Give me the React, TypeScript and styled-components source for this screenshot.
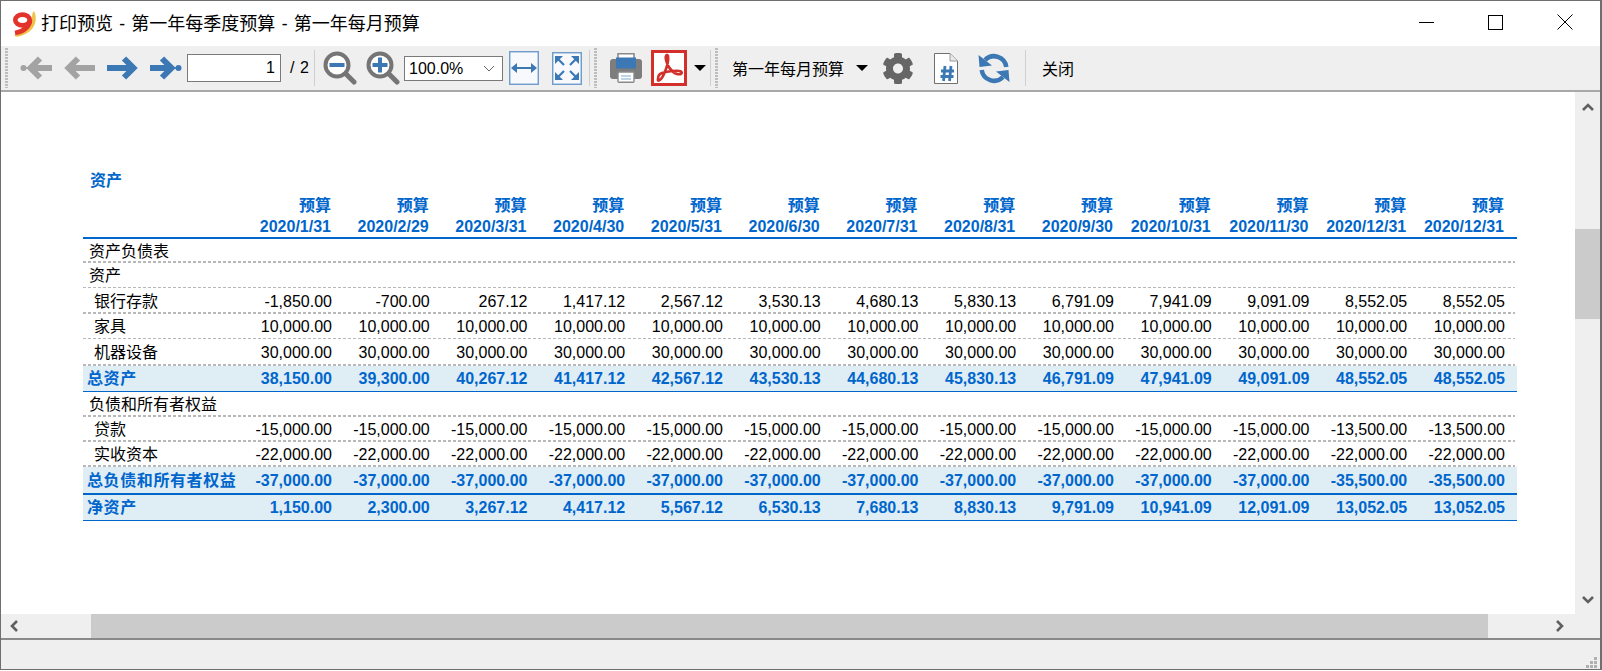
import React from "react";
import styled, { createGlobalStyle } from "styled-components";
import { FaCog } from "react-icons/fa";

const Global = createGlobalStyle`
  html, body { margin: 0; padding: 0; background: #fff; }
  body { font-family: "Liberation Sans", "Noto Sans CJK SC", sans-serif; color: #000; overflow: hidden; }
`;

const Win = styled.div`
  width: 1602px; height: 670px; box-sizing: border-box;
  border: 1px solid #6f6f6f; border-width: 1px 2px 1px 1px;
  display: flex; flex-direction: column; background: #fff;
`;
const TitleBar = styled.div`
  height: 45px; flex: none; display: flex; align-items: center; padding-left: 11px;
`;
const Title = styled.div`
  margin: 0 0 4px 3px; font-family: "Noto Sans", "Noto Sans CJK SC", sans-serif; font-size: 18px; white-space: nowrap; word-spacing: 1.6px;
`;
const WinButtons = styled.div`
  margin-left: auto; display: flex; align-items: center; padding-right: 27px; gap: 54px; margin-top: -3px;
`;
const Toolbar = styled.div`
  height: 44px; flex: none; background: #efefef; display: flex; align-items: center;
  border-bottom: 2px solid #a8a8a8; box-sizing: content-box; position: relative;
`;
const Grip = styled.span<{ $ml?: number }>`
  flex: none; width: 3px; height: 40px; margin-left: ${p => p.$ml ?? 0}px;
  background: repeating-linear-gradient(to bottom, #bdbdbd 0 2px, transparent 2px 3px);
`;
const Sep = styled.span<{ $ml?: number }>`
  flex: none; width: 1px; height: 36px; background: #cfcfcf; margin-left: ${p => p.$ml ?? 0}px;
`;
const Slot = styled.span<{ $ml?: number; $w: number }>`
  flex: none; display: flex; align-items: center; justify-content: center;
  width: ${p => p.$w}px; margin-left: ${p => p.$ml ?? 0}px;
`;
const PageInput = styled.div`
  flex: none; width: 94px; height: 28px; box-sizing: border-box; margin-left: 5px;
  border: 1px solid #7a7a7a; background: #fff; font-size: 16px; text-align: right;
  line-height: 26px; padding-right: 5px;
`;
const PageTotal = styled.div`
  flex: none; margin-left: 9px; font-size: 16px; width: 24px; white-space: nowrap; word-spacing: 1px;
`;
const ZoomSelect = styled.div`
  flex: none; width: 99px; height: 25px; box-sizing: border-box; margin-left: 4px;
  border: 1px solid #7a7a7a; background: #fff; font-size: 16px; line-height: 23px;
  padding-left: 4px; display: flex; align-items: center; justify-content: space-between; padding-right: 7px;
`;
const ToolLabel = styled.div<{ $ml: number }>`
  flex: none; font-family: "Noto Sans CJK SC", sans-serif; font-size: 16px; margin-left: ${p => p.$ml}px; white-space: nowrap; line-height: 20px;
`;
const Caret = styled.span<{ $ml: number }>`
  flex: none; width: 0; height: 0; margin-left: ${p => p.$ml}px;
  border-left: 6px solid transparent; border-right: 6px solid transparent; border-top: 6px solid #000;
`;
const FitBox = styled.span<{ $w: number; $h: number; $ml: number }>`
  flex: none; box-sizing: border-box; display: flex; align-items: center; justify-content: center;
  width: ${p => p.$w}px; height: ${p => p.$h}px; margin-left: ${p => p.$ml}px;
  border: 1px solid #6f9dcb; background: #f7f9fc; box-shadow: inset 0 0 0 0.5px #7ea9d3;
`;
const PdfBox = styled.span`
  flex: none; box-sizing: border-box; width: 36px; height: 36px; margin-left: 9px;
  border: 3px solid #d3302c; background: #fff; display: flex; align-items: center; justify-content: center;
`;

const Middle = styled.div`
  flex: 1; min-height: 0; display: flex;
`;
const Viewport = styled.div`
  flex: 1; min-width: 0; background: #fff; padding: 76px 0 0 82px; box-sizing: border-box; overflow: hidden;
`;
const VScroll = styled.div`
  width: 25px; flex: none; background: #efefef; display: flex; flex-direction: column; align-items: center;
`;
const VThumb = styled.div`
  width: 25px; height: 90px; background: #cbcbcb; margin-top: 116px; margin-bottom: auto;
`;
const ArrowBox = styled.span<{ $pad: string }>`
  display: flex; padding: ${p => p.$pad}; flex: none;
`;
const HRow = styled.div`
  height: 24px; flex: none; display: flex; align-items: center; background: #efefef;
`;
const HThumb = styled.div`
  width: 1397px; height: 24px; background: #cbcbcb; margin-left: 71px;
`;
const Status = styled.div`
  height: 31px; box-sizing: border-box; flex: none; background: #efefef; border-top: 2px solid #8a8a8a; position: relative;
`;
const ResizeGrip = styled.svg`
  position: absolute; right: 3px; bottom: 1px;
`;

const SectionTitle = styled.div`
  font-family: "Noto Sans CJK SC", sans-serif; font-weight: 700; color: #0066cc; font-size: 16px;
  padding-left: 7px; height: 27px; line-height: 22px;
`;
const Table = styled.div`
  width: 1434px;
`;
const Row = styled.div<{ $h: number; $rule?: "thin" | "thick" | "none"; $band?: boolean }>`
  display: grid; grid-template-columns: 151.25px repeat(13, 97.75px); padding-right: 12px;
  height: ${p => p.$h}px; box-sizing: border-box; align-items: center;
  ${p => p.$band ? "background-color: #dfedf5;" : ""}
  ${p => p.$rule === "thin" || p.$rule === "thick" ? `
    background-image: repeating-linear-gradient(to right, #b8b8b8 0 3px, transparent 3px 5px);
    background-size: 1432px ${p.$rule === "thick" ? 2 : 1}px;
    background-position: left bottom; background-repeat: no-repeat;
  ` : ""}
`;
const HeadRow = styled.div`
  display: grid; grid-template-columns: 151.25px repeat(13, 97.75px); padding-right: 12px;
  height: 44px; box-sizing: border-box; border-bottom: 2px solid #0066cc;
`;
const HeadCell = styled.div`
  text-align: right; color: #0066cc; font-weight: 700; font-size: 16px; line-height: 21px; padding-right: 1px; white-space: nowrap;
`;
const Label = styled.div<{ $indent?: boolean; $bold?: boolean }>`
  font-family: "Noto Sans CJK SC", sans-serif; font-size: 16px; white-space: nowrap; margin-top: -3px;
  padding-left: ${p => (p.$bold ? 4 : p.$indent ? 11 : 6)}px;
  font-weight: ${p => (p.$bold ? 700 : 400)};
  color: ${p => (p.$bold ? "#0066cc" : "#000")};
  ${p => (p.$bold ? "letter-spacing: .6px;" : "")}
`;
const Num = styled.div<{ $bold?: boolean }>`
  text-align: right; font-size: 16px; white-space: nowrap; padding-top: 1px;
  font-weight: ${p => (p.$bold ? 700 : 400)};
  color: ${p => (p.$bold ? "#0066cc" : "#000")};
`;
const Rule = styled.div<{ $w: number }>`
  height: ${p => p.$w}px; background: #0066cc;
`;

const dates = ["2020/1/31","2020/2/29","2020/3/31","2020/4/30","2020/5/31","2020/6/30","2020/7/31","2020/8/31","2020/9/30","2020/10/31","2020/11/30","2020/12/31","2020/12/31"];

type R = { label: string; h: number; rule?: "thin"|"thick"|"none"; indent?: boolean; bold?: boolean; vals?: string[]; after?: number };
const ten = Array(13).fill("10,000.00");
const thirty = Array(13).fill("30,000.00");
const rows: R[] = [
  { label: "资产负债表", h: 24, rule: "thick" },
  { label: "资产", h: 25, rule: "thin" },
  { label: "银行存款", h: 26, rule: "thick", indent: true, vals: ["-1,850.00","-700.00","267.12","1,417.12","2,567.12","3,530.13","4,680.13","5,830.13","6,791.09","7,941.09","9,091.09","8,552.05","8,552.05"] },
  { label: "家具", h: 25, rule: "thin", indent: true, vals: ten },
  { label: "机器设备", h: 27, rule: "thick", indent: true, vals: thirty },
  { label: "总资产", h: 25, bold: true, rule: "none", after: 1, vals: ["38,150.00","39,300.00","40,267.12","41,417.12","42,567.12","43,530.13","44,680.13","45,830.13","46,791.09","47,941.09","49,091.09","48,552.05","48,552.05"] },
  { label: "负债和所有者权益", h: 25, rule: "thick" },
  { label: "贷款", h: 25, rule: "thick", indent: true, vals: [...Array(11).fill("-15,000.00"),"-13,500.00","-13,500.00"] },
  { label: "实收资本", h: 25, rule: "thick", indent: true, vals: Array(13).fill("-22,000.00") },
  { label: "总负债和所有者权益", h: 26, bold: true, rule: "none", after: 2, vals: [...Array(11).fill("-37,000.00"),"-35,500.00","-35,500.00"] },
  { label: "净资产", h: 25, bold: true, rule: "none", after: 1, vals: ["1,150.00","2,300.00","3,267.12","4,417.12","5,567.12","6,530.13","7,680.13","8,830.13","9,791.09","10,941.09","12,091.09","13,052.05","13,052.05"] },
];

const GRAY = "#a3a3a3";
const BLUE = "#3c78b4";
const Arrow = ({ color, dir, dot }: { color: string; dir: "l" | "r"; dot?: boolean }) => (
  <svg width="32" height="24" viewBox="0 0 32 24" style={dir === "l" ? { transform: "scaleX(-1)" } : undefined}>
    {dot ? (
      <>
        <path d="M0 12H20M12 2.5 21.5 12 12 21.5" fill="none" stroke={color} strokeWidth="6" />
        <path d="M22 12H27" stroke={color} strokeWidth="1.5" />
        <circle cx="28.5" cy="12" r="3" fill={color} />
      </>
    ) : (
      <path d="M0 12H24M17 2.5 26.5 12 17 21.5" fill="none" stroke={color} strokeWidth="6" />
    )}
  </svg>
);
const Magnifier = ({ plus }: { plus?: boolean }) => (
  <svg width="34" height="34" viewBox="0 0 34 34">
    <circle cx="14" cy="14" r="11.5" fill="#fff" stroke="#757575" strokeWidth="4" />
    <path d="M23 23 31 31" stroke="#757575" strokeWidth="5" strokeLinecap="round" />
    <path d="M6.5 14H21.5" stroke={BLUE} strokeWidth="4" />
    {plus && <path d="M14 6.5V21.5" stroke={BLUE} strokeWidth="4" />}
  </svg>
);
const Logo = () => (
  <svg width="26" height="26" viewBox="0 0 26 26">
    <path d="M22 0C26 8 24 21 7 25.5 3.5 26.2 1.5 24.5 3 24 13 23 20 14 20.5 2Z" fill="#eec34a" />
    <ellipse cx="10.5" cy="9" rx="7.2" ry="5.4" fill="none" stroke="#e3342c" strokeWidth="4.6" />
    <path d="M18 9C18 15 12 20.5 3 22" fill="none" stroke="#e3342c" strokeWidth="4.6" />
  </svg>
);
const Printer = () => (
  <svg width="32" height="30" viewBox="0 0 32 30">
    <path d="M8 5V.8H24V5" fill="#fff" stroke="#8a8a8a" strokeWidth="1.6" />
    <path d="M3 6H29Q32 6 32 9V23Q32 26 29 26H3Q0 26 0 23V9Q0 6 3 6Z" fill="#7d7d7d" />
    <rect x="6" y="4.5" width="20" height="11" fill={BLUE} />
    <rect x="8" y="19" width="16" height="10.2" rx="1" fill="#fff" stroke="#8a8a8a" strokeWidth="1.4" />
    <path d="M11 23H21M11 26H21" stroke="#7ea9d3" strokeWidth="1" />
  </svg>
);
const Acrobat = () => (
  <svg width="30" height="30" viewBox="0 0 30 30">
    <path d="M4 26C3 29 7 28 10 21 13 14 15 7 14 3 13 1 11 2 12 7 13 12 17 19 23 21 27 22 29 20 27 18.5 24 17 14 18 8 20 5 21 4 24 4 26Z" fill="none" stroke="#d3302c" strokeWidth="2.6" />
  </svg>
);
const DocHash = () => (
  <svg width="24" height="31" viewBox="0 0 24 31">
    <path d="M.5.5H16L23.5 8V30.5H.5Z" fill="#fff" stroke="#707070" />
    <path d="M16 .5V8H23.5" fill="#e8e8e8" stroke="#9a9a9a" />
    <path d="M11 13 9.5 28M17 13 15.5 28M7 18H20M6.5 23.5H19.5" fill="none" stroke={BLUE} strokeWidth="2.8" />
  </svg>
);
const Refresh = () => (
  <svg width="32" height="31" viewBox="0 0 32 31">
    <path d="M7 7A12.5 12.5 0 0 1 28.3 14" fill="none" stroke={BLUE} strokeWidth="4.5" />
    <path d="M25 24A12.5 12.5 0 0 1 3.7 17" fill="none" stroke={BLUE} strokeWidth="4.5" />
    <path d="M.5 2 1.5 14 14 12.5ZM31.5 29 30.5 17 18 18.5Z" fill={BLUE} />
  </svg>
);
const Chevron = ({ d }: { d: string }) => (
  <svg width="12" height="12" viewBox="0 0 12 12">
    <path d={d} fill="none" stroke="#606060" strokeWidth="2.6" />
  </svg>
);

export default function App() {
  return (
    <>
      <Global />
      <Win>
        <TitleBar>
          <Logo />
          <Title>打印预览 - 第一年每季度预算 - 第一年每月预算</Title>
          <WinButtons>
            <svg width="15" height="15" viewBox="0 0 15 15"><path d="M0 7.5H15" stroke="#000" /></svg>
            <svg width="15" height="15" viewBox="0 0 15 15"><rect x=".5" y=".5" width="14" height="14" fill="none" stroke="#000" /></svg>
            <svg width="16" height="16" viewBox="0 0 16 16"><path d="M.5.5 15.5 15.5M15.5.5 .5 15.5" stroke="#000" /></svg>
          </WinButtons>
        </TitleBar>
        <Toolbar>
          <Grip $ml={4} />
          <Slot $w={32} $ml={12}><Arrow color={GRAY} dir="l" dot /></Slot>
          <Slot $w={32} $ml={11}><Arrow color={GRAY} dir="l" /></Slot>
          <Slot $w={32} $ml={12}><Arrow color={BLUE} dir="r" /></Slot>
          <Slot $w={32} $ml={11}><Arrow color={BLUE} dir="r" dot /></Slot>
          <PageInput>1</PageInput>
          <PageTotal>/ 2</PageTotal>
          <Sep />
          <Slot $w={34} $ml={8}><Magnifier /></Slot>
          <Slot $w={34} $ml={9}><Magnifier plus /></Slot>
          <ZoomSelect>100.0%
            <svg width="12" height="7" viewBox="0 0 12 7"><path d="M1 1 6 6 11 1" fill="none" stroke="#666" /></svg>
          </ZoomSelect>
          <FitBox $w={30} $h={34} $ml={6}>
            <svg width="26" height="12" viewBox="0 0 26 12"><path d="M2 6H24" stroke={BLUE} strokeWidth="2" /><path d="M0 6 6 1V11ZM26 6 20 1V11Z" fill={BLUE} /></svg>
          </FitBox>
          <FitBox $w={30} $h={33} $ml={13}>
            <svg width="26" height="26" viewBox="0 0 26 26"><path d="M4 4 10 10M22 4 16 10M4 22 10 16M22 22 16 16" stroke={BLUE} strokeWidth="2.2" /><path d="M1 1H9L1 9ZM25 1H17L25 9ZM1 25H9L1 17ZM25 25H17L25 17Z" fill={BLUE} /></svg>
          </FitBox>
          <Sep $ml={7} />
          <Grip $ml={4} />
          <Slot $w={32} $ml={13}><Printer /></Slot>
          <PdfBox><Acrobat /></PdfBox>
          <Caret $ml={7} />
          <Sep $ml={4} />
          <Grip $ml={4} />
          <ToolLabel $ml={14}>第一年每月预算</ToolLabel>
          <Caret $ml={12} />
          <Slot $w={32} $ml={14}><FaCog size={33} color="#666" /></Slot>
          <Slot $w={24} $ml={20}><DocHash /></Slot>
          <Slot $w={32} $ml={20}><Refresh /></Slot>
          <Sep $ml={15} />
          <ToolLabel $ml={16}>关闭</ToolLabel>
        </Toolbar>
        <Middle>
          <Viewport>
            <SectionTitle>资产</SectionTitle>
            <Table>
              <HeadRow>
                <HeadCell />
                {dates.map((d, i) => (
                  <HeadCell key={i}>预算<br />{d}</HeadCell>
                ))}
              </HeadRow>
              {rows.map((r, i) => (
                <React.Fragment key={i}>
                  <Row $h={r.h} $rule={r.rule} $band={r.bold}>
                    <Label $indent={r.indent} $bold={r.bold}>{r.label}</Label>
                    {r.vals?.map((v, j) => <Num key={j} $bold={r.bold}>{v}</Num>)}
                  </Row>
                  {r.after ? <Rule $w={r.after} /> : null}
                </React.Fragment>
              ))}
            </Table>
          </Viewport>
          <VScroll>
            <ArrowBox $pad="9px 0 0"><Chevron d="M1 9 6 4 11 9" /></ArrowBox>
            <VThumb />
            <ArrowBox $pad="0 0 8px"><Chevron d="M1 3 6 8 11 3" /></ArrowBox>
          </VScroll>
        </Middle>
        <HRow>
          <ArrowBox $pad="0 0 0 7px"><Chevron d="M9 1 4 6 9 11" /></ArrowBox>
          <HThumb />
          <ArrowBox $pad="0 0 0 66px"><Chevron d="M3 1 8 6 3 11" /></ArrowBox>
        </HRow>
        <Status>
          <ResizeGrip width="11" height="11" viewBox="0 0 11 11">
            <path d="M8 0h3v3H8zM4 4h3v3H4zM8 4h3v3H8zM0 8h3v3H0zM4 8h3v3H4zM8 8h3v3H8z" fill="#b0b0b0" />
          </ResizeGrip>
        </Status>
      </Win>
    </>
  );
}
